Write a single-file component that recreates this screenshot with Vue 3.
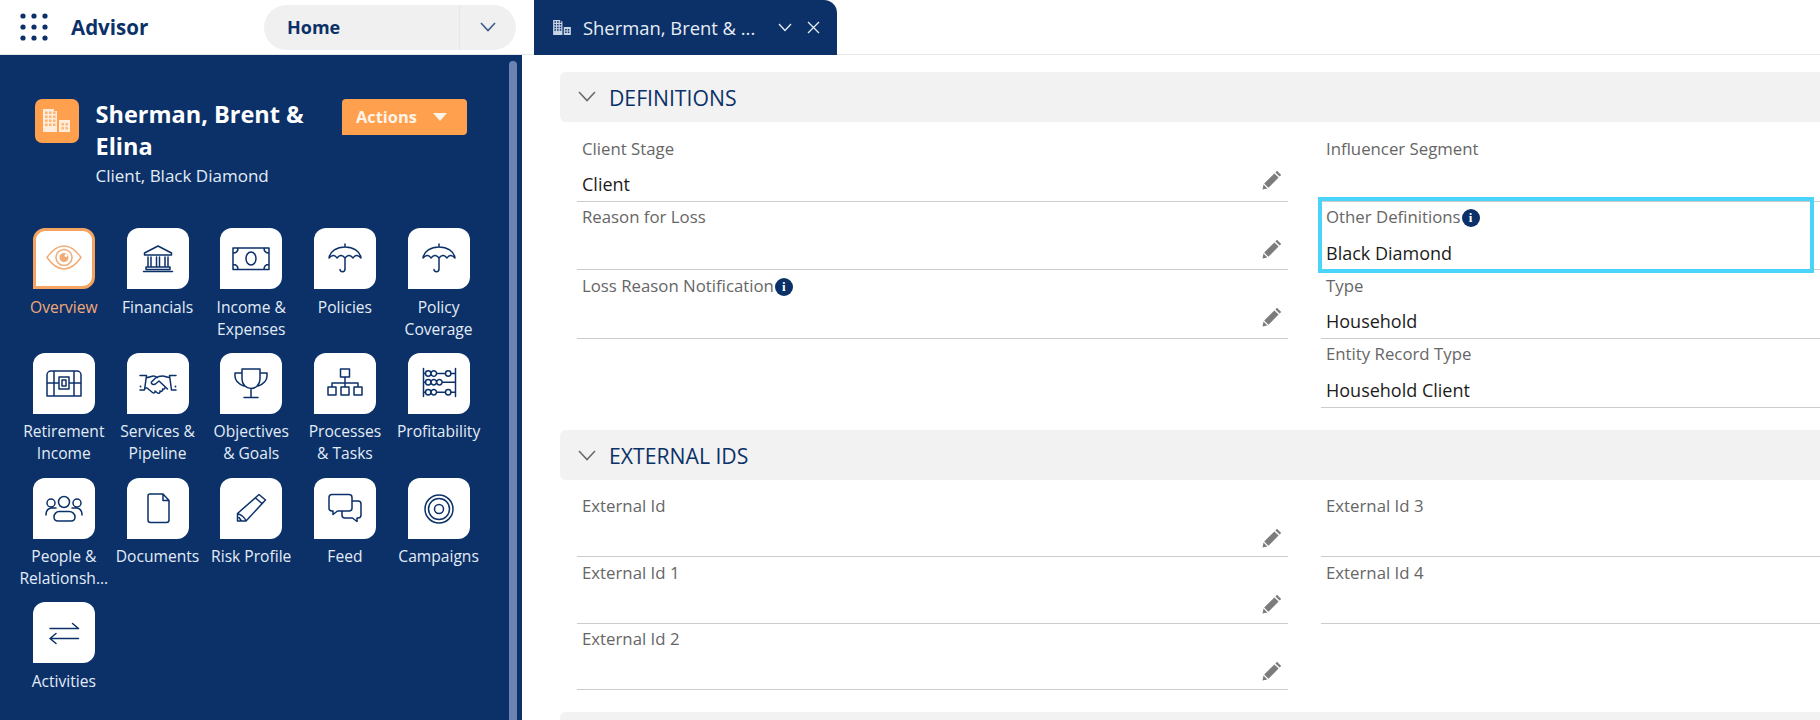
<template>
  <div class="app">
    <aside class="side">
      <div class="side-head">
        <svg class="launcher" width="28" height="28" viewBox="0 0 28 28">
          <circle v-for="dot in dots" :key="dot.id" :cx="dot.x" :cy="dot.y" r="2.6" fill="#0b3168" />
        </svg>
        <span class="app-name">Advisor</span>
        <div class="nav-pill">
          <span class="nav-home">Home</span>
          <span class="nav-caret">
            <svg width="18" height="12" viewBox="0 0 18 12"><path d="M2 2l7 7.5L16 2" fill="none" stroke="#3c5a86" stroke-width="1.6" /></svg>
          </span>
        </div>
      </div>
      <div class="panel">
        <div class="scroll-thumb"></div>
        <div class="client">
          <div class="client-icon">
            <svg width="44" height="44" viewBox="0 0 44 44">
              <path d="M8 10h11v2h3v21H8zM24 21h11v12H24z" fill="#ffeedd" />
              <path :d="buildingWindows" fill="#ffb470" />
            </svg>
          </div>
          <div class="client-text">
            <div class="client-name">Sherman, Brent &amp; Elina</div>
            <div class="client-sub">Client, Black Diamond</div>
          </div>
          <button class="actions">Actions<i class="actions-caret"></i></button>
        </div>
        <div class="tiles">
          <div v-for="tile in tiles" :key="tile.label" class="tile" :class="{ current: tile.current }">
            <div class="tile-box">
              <svg width="40" height="40" viewBox="0 0 40 40">
                <path :d="tile.d" fill="none" stroke="currentColor" stroke-width="1.5" stroke-linejoin="round" stroke-linecap="round" />
                <path v-if="tile.fill" :d="tile.fill" fill="currentColor" fill-rule="evenodd" />
              </svg>
            </div>
            <div class="tile-label">{{ tile.label }}</div>
          </div>
        </div>
      </div>
    </aside>

    <main class="main">
      <div class="tabbar">
        <div class="tab">
          <svg class="tab-icon" width="18" height="16" viewBox="0 0 20 18">
            <path d="M0 0h8v1.500h2.500V17H0zM12 8h8v9h-8z" fill="#c8d3e4" />
            <path :d="tabWindows" fill="#0b3168" />
          </svg>
          <span class="tab-title">Sherman, Brent &amp; ...</span>
          <svg width="14" height="9" viewBox="0 0 14 9"><path d="M1 1l6 6.500L13 1" fill="none" stroke="#e8eef6" stroke-width="1.3" /></svg>
          <svg class="tab-close" width="13" height="13" viewBox="0 0 13 13"><path d="M1 1l11 11M12 1L1 12" fill="none" stroke="#e8eef6" stroke-width="1.3" /></svg>
        </div>
      </div>
      <div class="content">
        <section v-for="sec in sections" :key="sec.title" class="section" :class="sec.cls">
          <div class="sec-head">
            <svg width="18" height="11" viewBox="0 0 18 11"><path d="M1 1l8 8.500L17 1" fill="none" stroke="#6b6b6b" stroke-width="1.6" /></svg>
            <span class="sec-title">{{ sec.title }}</span>
          </div>
          <div class="cols">
            <div v-for="(col, i) in sec.cols" :key="i" class="col">
              <div v-for="f in col" :key="f.label" class="field">
                <div class="field-label">{{ f.label }}<span v-if="f.info" class="info">i</span></div>
                <div class="field-row">
                  <span class="field-value">{{ f.value }}</span>
                  <svg v-if="f.edit" class="pencil" width="20" height="20" viewBox="0 0 20 20">
                    <path d="M15 .8l4.200 4.200-1.600 1.600-4.200-4.200zM12.400 3.400l4.200 4.200L6.400 17.800l-4.200-4.200zM1.500 14.600l3.900 3.900-4.900 1z" fill="#7c7c7c" />
                  </svg>
                </div>
                <div v-if="f.highlight" class="mark"></div>
              </div>
            </div>
          </div>
        </section>
        <div class="sec-head next"></div>
      </div>
    </main>
  </div>
</template>

<script setup>
// launcher dots
const dots = []
for (let r = 0; r < 3; r++) {
  for (let c = 0; c < 3; c++) {
    dots.push({ id: r + '-' + c, x: 3 + c * 11, y: 3 + r * 11 })
  }
}

// little square windows for the building icon
const windows = (x, y, cols, rows, step, size) => {
  let d = ''
  for (let r = 0; r < rows; r++) {
    for (let c = 0; c < cols; c++) {
      d += `M${x + c * step} ${y + r * step}h${size}v${size}h-${size}z`
    }
  }
  return d
}
const buildingWindows = windows(10, 12.5, 3, 4, 4, 2.6) + windows(26.5, 24, 2, 2, 4, 2.4)
const tabWindows = windows(1.5, 1.5, 3, 4, 3, 1.7) + windows(13.5, 10, 2, 2, 3, 1.7)

const umbrella = 'M20 5v3M4 19C5 12 12 8 20 8s15 4 16 11c-3-3.500-6-3.500-8 0-2.500-3.500-5.500-3.500-8 0-2.500-3.500-5.500-3.500-8 0-2-3.500-5-3.500-8 0zM20 19v11c0 3.500-5 3.500-5 .5'

const circle = (cx, cy, r) => `M${cx - r} ${cy}a${r} ${r} 0 1 0 ${r * 2} 0a${r} ${r} 0 1 0 -${r * 2} 0z`

const tiles = [
  { label: 'Overview', current: true,
    d: 'M3 18.500C9 10 15 7 20 7s11 3 17 11.500C31 27 25 30 20 30S9 27 3 18.500z' + circle(20, 18.5, 8),
    fill: circle(20, 18.5, 4.5) + circle(22, 16.5, 1.5) },
  { label: 'Financials',
    d: 'M20 7L6.500 14v2h27v-2zM10 18v9M13 18v9M18.500 18v9M21.500 18v9M27 18v9M30 18v9M8 28h24v2.500H8zM5.500 32.500h29' },
  { label: 'Income &\nExpenses',
    d: 'M2 9h36v21.500H2zM2 14c3 0 5-2 5-5M38 14c-3 0-5-2-5-5M2 25.500c3 0 5 2 5 5M38 25.500c-3 0-5 2-5 5M20 13c-3 0-5 3-5 6.500s2 6.500 5 6.500 5-3 5-6.500-2-6.500-5-6.500z' },
  { label: 'Policies', d: umbrella },
  { label: 'Policy\nCoverage', d: umbrella },
  { label: 'Retirement\nIncome',
    d: 'M7 8h26c2.200 0 4 1.800 4 4v21H3V12c0-2.200 1.800-4 4-4zM10 8v25M30 8v25M3 20h11M26 20h11M15 14h10v12H15zM18 17h4v6h-4z' },
  { label: 'Services &\nPipeline',
    d: 'M2 12.500h6.500L6.500 27H2M38 12.500h-6.500l2 14.500H38M8.500 14.500c3 0 4.500-1.500 7-1.500 1.500 0 2.500.5 4 1.500M31.500 14.500c-3 0-4-1.500-7-1.500-3 0-5 .5-7 2l-4 4c-1 2 2.500 3.500 4.500 1.500l3-2.500 8.500 8M7 25h2l5.500 4.500c1.500 1.200 3-.3 2.500-1.500l2.500 2c1.500 1 3-.5 2.500-2 1.500 1 3.500-.5 2.500-2 1.500.8 3-.8 2.500-2.500',
    fill: circle(2.5, 23.5, 0.9) + circle(37.5, 23.5, 0.9) },
  { label: 'Objectives\n& Goals',
    d: 'M11 6h18v10c0 5.500-4 9.500-9 9.500s-9-4-9-9.500zM11 10H4v3c0 5 3.500 8 9 10M29 10h7v3c0 5-3.500 8-9 10M20 25.500v8.500M13 34.500h14' },
  { label: 'Processes\n& Tasks',
    d: 'M15.500 6h9v8h-9zM20 14v6M7 24v-4h26v4M20 20v4M3 24h8v8H3zM16 24h8v8h-8zM29 24h8v8h-8z' },
  { label: 'Profitability',
    d: 'M4.500 5.500v28M36.500 5.500v28M4.500 10.500h2M17.500 10.500h9M32 10.500h4.500M4.500 19.200h2M23 19.200h13.500M4.500 29.200h2M17.500 29.200h9M32 29.200h4.500'
      + circle(9.2, 10.5, 2.7) + circle(14.8, 10.5, 2.7) + circle(29.2, 10.5, 2.7)
      + circle(9.2, 19.2, 2.7) + circle(14.8, 19.2, 2.7) + circle(20.4, 19.2, 2.7)
      + circle(9.2, 29.2, 2.7) + circle(14.8, 29.2, 2.7) + circle(29.2, 29.2, 2.7) },
  { label: 'People &\nRelationsh...',
    d: circle(20, 14, 5.5) + circle(7, 15, 4) + circle(33, 15, 4) + 'M15 23.500h10c3.500 0 6 2.500 6 5.500 0 2.500-1.500 4-4 4H14c-2.500 0-4-1.500-4-4 0-3 2.500-5.500 5-5.500zM2 27c0-4 2-6.500 5-7h5M38 27c0-4-2-6.500-5-7h-5' },
  { label: 'Documents',
    d: 'M12 6h13l6 6.500V32c0 1.400-.9 2.500-2.500 2.500h-16C10.900 34.500 10 33.400 10 32V8c0-1.400.6-2 2-2zM25 6v6.500h6' },
  { label: 'Risk Profile',
    d: 'M28 6.500l6.500 5.500L15 33H6.500v-7.500zM24.500 10l6.500 5.500M6.500 26c3 0 7 3 8.500 7M8 29.500l2.500 3.500' },
  { label: 'Feed',
    d: 'M7 6.500h17c1.700 0 3 1.300 3 3V20c0 1.700-1.300 3-3 3H12.500L8 26.500V23H7c-1.700 0-3-1.300-3-3V9.500c0-1.700 1.300-3 3-3zM27 13h6c1.700 0 3 1.300 3 3v11c0 1.700-1.300 3-3 3h-1v3.500L27.500 30H20c-1.700 0-3-1.300-3-3v-4' },
  { label: 'Campaigns',
    d: circle(20, 21, 14) + circle(20, 21, 10.5) + circle(20, 21, 4.5) },
  { label: 'Activities',
    d: 'M6 15.500h28.500M28.500 10.500l6 5M34.500 25.500H6M12 20.500l-6 5 6 5' },
]

const sections = [
  {
    title: 'DEFINITIONS',
    cls: 'defs',
    cols: [
      [
        { label: 'Client Stage', value: 'Client', edit: true },
        { label: 'Reason for Loss', value: '', edit: true },
        { label: 'Loss Reason Notification', value: '', edit: true, info: true },
      ],
      [
        { label: 'Influencer Segment', value: '' },
        { label: 'Other Definitions', value: 'Black Diamond', info: true, highlight: true },
        { label: 'Type', value: 'Household' },
        { label: 'Entity Record Type', value: 'Household Client' },
      ],
    ],
  },
  {
    title: 'EXTERNAL IDS',
    cls: 'ext',
    cols: [
      [
        { label: 'External Id', value: '', edit: true },
        { label: 'External Id 1', value: '', edit: true },
        { label: 'External Id 2', value: '', edit: true },
      ],
      [
        { label: 'External Id 3', value: '' },
        { label: 'External Id 4', value: '' },
      ],
    ],
  },
]
</script>

<style>
html, body {
  margin: 0;
  background: #fff;
}
</style>

<style scoped>
.app {
  width: 1820px;
  height: 720px;
  display: flex;
  overflow: hidden;
  font-family: "Open Sans", "Liberation Sans", sans-serif;
  background: #fff;
}

/* left side */
.side {
  width: 522px;
  flex: none;
  display: flex;
  flex-direction: column;
}

.side-head {
  height: 54px;
  flex: none;
  border-bottom: 1px solid #e4e6ea;
  display: flex;
  align-items: center;
  padding-left: 20px;
}

.app-name {
  margin-left: 23px;
  font-size: 20.500px;
  font-weight: 700;
  color: #0b3168;
}

.nav-pill {
  margin-left: auto;
  margin-right: 6px;
  width: 252px;
  height: 45px;
  background: #f0f0f0;
  border-radius: 23px;
  display: flex;
  align-items: center;
}

.nav-home {
  flex: 1;
  padding-left: 23px;
  font-size: 18px;
  font-weight: 700;
  color: #0b3168;
}

.nav-caret {
  width: 56px;
  height: 45px;
  border-left: 1px solid #e6e6e6;
  display: flex;
  align-items: center;
  justify-content: center;
}

.panel {
  flex: 1;
  position: relative;
  background: #0b3168;
  padding: 44px 0 0 17px;
}

.scroll-thumb {
  position: absolute;
  left: 509px;
  top: 6px;
  bottom: 0;
  width: 8px;
  border-radius: 4px 4px 0 0;
  background: #6a83b3;
}

.client {
  display: flex;
  align-items: flex-start;
  padding-left: 18px;
  height: 129px;
}

.client-icon {
  width: 44px;
  height: 44px;
  border-radius: 7px;
  background: #ffa04e;
  flex: none;
}

.client-text {
  width: 246.500px;
  margin-left: 16.500px;
  padding-right: 20px;
  box-sizing: border-box;
  margin-top: -1px;
}

.client-name {
  font-size: 23.500px;
  font-weight: 700;
  line-height: 32px;
  color: #fff;
}

.client-sub {
  font-size: 17px;
  line-height: 27px;
  color: #e3ecf7;
}

.actions {
  width: 125px;
  height: 36px;
  border: 0;
  border-radius: 4px 4px 4px 0;
  background: #ffa04e;
  color: #fff4e8;
  font: 700 16.400px "Open Sans", sans-serif;
  display: flex;
  align-items: center;
  padding: 0 0 2px 14px;
  flex: none;
}

.actions-caret {
  margin: 2px 0 0 16px;
  width: 0;
  height: 0;
  border-left: 7px solid transparent;
  border-right: 7px solid transparent;
  border-top: 8px solid #fff4e8;
}

.tiles {
  display: grid;
  grid-template-columns: repeat(5, 93.700px);
  grid-auto-rows: 124.800px;
}

.tile {
  display: flex;
  flex-direction: column;
  align-items: center;
}

.tile-box {
  width: 62px;
  height: 61px;
  box-sizing: border-box;
  background: #fff;
  border-radius: 12px 12px 12px 0;
  color: #0b3168;
  display: flex;
  align-items: center;
  justify-content: center;
}

.tile-label {
  margin-top: 6.500px;
  font-size: 15.600px;
  line-height: 22px;
  color: #e3ecf7;
  text-align: center;
  white-space: pre-line;
}

.current .tile-box {
  border: 3px solid #f4a460;
  color: #f2ab75;
}

.current .tile-label {
  color: #f0a97a;
}

/* right side */
.main {
  flex: 1;
  min-width: 0;
  display: flex;
  flex-direction: column;
}

.tabbar {
  height: 54px;
  flex: none;
  border-bottom: 1px solid #e4e6ea;
  padding-left: 12px;
  display: flex;
}

.tab {
  width: 303px;
  height: 55px;
  box-sizing: border-box;
  background: #0b3168;
  border-radius: 0 13px 0 0;
  display: flex;
  align-items: center;
  padding-left: 19px;
  color: #e8eef6;
}

.tab-title {
  margin-left: 12px;
  width: 195px;
  font-size: 18.400px;
  white-space: nowrap;
}

.tab-close {
  margin-left: 15px;
}

.content {
  flex: 1;
  overflow: hidden;
  padding: 16.700px 0 0 38px;
}

.section {
  margin-bottom: 22.500px;
}

.sec-head {
  height: 50px;
  margin-right: -20px;
  background: #f2f2f2;
  border-radius: 6px;
  display: flex;
  align-items: center;
  padding-left: 18px;
}

.sec-title {
  margin: 1px 0 0 13px;
  font-size: 21.200px;
  color: #0b3168;
}

.cols {
  display: flex;
  gap: 33px;
  margin: 11.500px 0 0 17px;
  width: 1500px;
}

.ext .cols {
  margin-top: 10.900px;
}

.col {
  width: 711px;
  flex: none;
}

.field {
  position: relative;
  height: 68.600px;
  box-sizing: border-box;
  border-bottom: 1px solid #cccccc;
  padding: 2px 6px 0 5px;
}

.ext .field {
  height: 66.300px;
}

.field-label {
  display: flex;
  align-items: center;
  height: 26px;
  font-size: 16.800px;
  color: #666666;
}

.info {
  width: 18px;
  height: 18px;
  border-radius: 50%;
  background: #0b3168;
  color: #fff;
  font: 700 13px/18px "Liberation Serif", serif;
  text-align: center;
  margin: 3px 0 0 1px;
}

.field-row {
  display: flex;
  justify-content: space-between;
  align-items: flex-start;
  margin-top: 9px;
  min-height: 28px;
}

.field-value {
  font-size: 18px;
  line-height: 28px;
  color: #1c1c1c;
}

.mark {
  position: absolute;
  left: -3px;
  top: -4.800px;
  width: 496px;
  height: 75.700px;
  box-sizing: border-box;
  border: 4px solid #4ad4f9;
  pointer-events: none;
}
</style>
